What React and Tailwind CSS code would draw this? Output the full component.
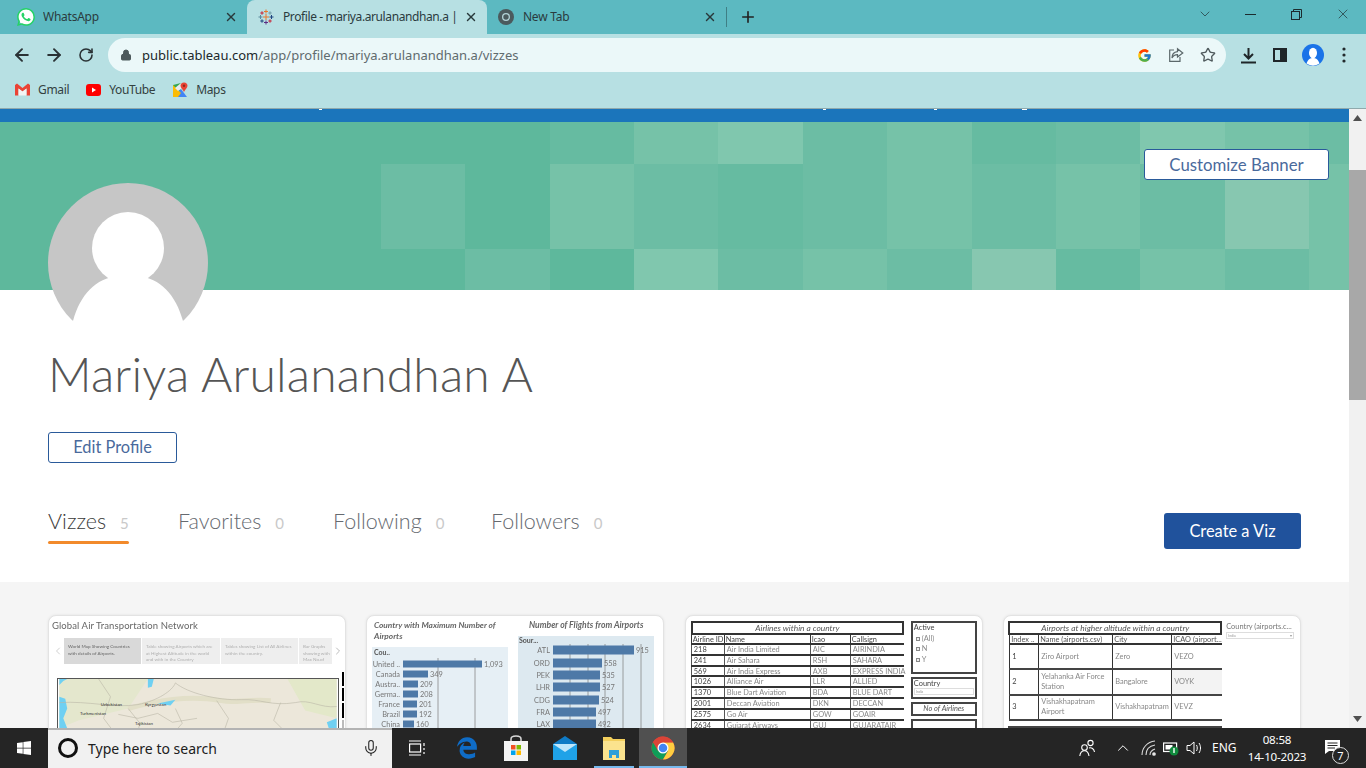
import React from 'react';
import { ArrowLeft, ArrowRight, RotateCw, Lock, Star, Plus, X, ChevronDown, ChevronUp, Mic } from 'lucide-react';
import { SiWhatsapp } from 'react-icons/si';
import { FcGoogle } from 'react-icons/fc';
import { FaWindows } from 'react-icons/fa';
import { FaEdgeLegacy } from 'react-icons/fa6';

const b = 'bg-[#5eb89c]', a = 'bg-[#66bba1]', c = 'bg-[#6cbda4]', d = 'bg-[#76c2a8]', e = 'bg-[#80c7ae]', f = 'bg-[#87c7b0]';
const tiles = [
  b, b, b, a, d, e, c, d, a, c, e, d, c,
  b, c, b, d, c, a, c, d, c, d, c, f, d,
  b, b, c, b, e, c, d, c, f, a, d, c, d,
];

function ChromeLogo({ size = 16 }) {
  return (
    <svg width={size} height={size} viewBox="0 0 48 48">
      <circle cx="24" cy="24" r="23" fill="#db4437" />
      <path d="M4.1 12.5 A23 23 0 0 0 24 47 L36 26 L14 26 Z" fill="#0f9d58" />
      <path d="M24 47 A23 23 0 0 0 44 12.5 L24 12.5 L34 30 Z" fill="#ffcd40" />
      <path d="M24 1 A23 23 0 0 0 4.1 12.5 L14 30 L24 13 L44 13 A23 23 0 0 0 24 1Z" fill="#db4437" />
      <circle cx="24" cy="24" r="11" fill="#fff" />
      <circle cx="24" cy="24" r="8.5" fill="#4285f4" />
    </svg>
  );
}

function TableauLogo() {
  const cross = (x, y, s, col, k) => (
    <path key={k} d={`M${x - s} ${y}H${x + s}M${x} ${y - s}V${y + s}`} stroke={col} strokeWidth="1" />
  );
  return (
    <svg width="16" height="16" viewBox="0 0 16 16">
      {cross(8, 8, 3, '#e8762c', 1)}
      {cross(8, 2.5, 2, '#e8762c', 2)}
      {cross(8, 13.5, 2, '#5b2c83', 3)}
      {cross(2.5, 8, 2, '#59879b', 4)}
      {cross(13.5, 8, 2, '#1f447e', 5)}
      {cross(4, 4, 1.7, '#c72037', 6)}
      {cross(12, 4, 1.7, '#7099a6', 7)}
      {cross(4, 12, 1.7, '#1f447e', 8)}
      {cross(12, 12, 1.7, '#c72037', 9)}
    </svg>
  );
}

function Tab({ icon, title, active, w }) {
  return (
    <div className={`relative h-[34px] flex items-center shrink-0 pr-[9px] ${w} ${active ? 'bg-[#b7e0e3] rounded-t-[8px]' : ''}`}>
      <span className="w-[16px] h-[16px] flex items-center justify-center shrink-0">{icon}</span>
      <span className={`ml-[9px] flex-1 min-w-0 overflow-hidden whitespace-nowrap text-[12px] text-[#2b3b3e] font-['Noto_Sans',sans-serif] ${active ? 'tracking-[-0.4px]' : 'tracking-[-0.25px]'}`}>{title}</span>
      <X size={14} strokeWidth={2.4} className="text-[#28383b] shrink-0 ml-[8px]" />
    </div>
  );
}

function Toolbar() {
  return (
    <div className="h-[38px] flex items-center bg-[#b7e0e3] pt-[4px]">
      <div className="flex items-center gap-[12px] pl-[12px] w-[108px] text-[#2a3235]">
        <ArrowLeft size={20} strokeWidth={2.3} />
        <ArrowRight size={20} strokeWidth={2.3} />
        <RotateCw size={16} strokeWidth={2.4} className="ml-[2px]" />
      </div>
      <div className="w-[1118px] h-[34px] rounded-full bg-[#ebf8f9] flex items-center pl-[12px] pr-[10px]">
        <Lock size={12} fill="#4d5a5d" className="text-[#4d5a5d]" />
        <span className="ml-[10px] pt-[1px] text-[13px] text-[#5f6b6e] font-['Noto_Sans',sans-serif] whitespace-nowrap">
          <span className="text-[#20282b]">public.tableau.com</span>/app/profile/mariya.arulanandhan.a/vizzes
        </span>
        <span className="ml-auto flex items-center gap-[16px]">
          <FcGoogle size={15} />
          <svg width="16" height="16" viewBox="0 0 16 16" fill="none" stroke="#5c686b" strokeWidth="1.2">
            <path d="M6 3H1.7V14.4H12V10" />
            <path d="M9.5 1.7L14.8 6L9.5 10V7.6C7 7.6 5.2 8.6 4 11C4 7.4 6 5 9.5 4.6Z" />
          </svg>
          <Star size={16} strokeWidth={2} className="text-[#505b5e]" />
        </span>
      </div>
      <div className="flex items-center pl-[14px] gap-[15px] text-[#22292c]">
        <svg width="17" height="17" viewBox="0 0 17 17" fill="none" stroke="#1f2629" strokeWidth="2">
          <path d="M8.5 1V11M4 7L8.5 11.5L13 7M1 15.5H16" />
        </svg>
        <svg width="14" height="14" viewBox="0 0 14 14" fill="none" stroke="#1f2629" strokeWidth="2" className="ml-[1px]">
          <rect x="1" y="1" width="12" height="12" />
          <rect x="8" y="1" width="5" height="12" fill="#1f2629" />
        </svg>
        <svg width="22" height="22" viewBox="0 0 22 22">
          <circle cx="11" cy="11" r="11" fill="#1a73e8" />
          <ellipse cx="11" cy="9" rx="4" ry="5.3" fill="#fff" />
          <path d="M4.5 19.5C6 15 8.5 14 11 14C13.5 14 16 15 17.5 19.5A11 11 0 0 1 4.5 19.5Z" fill="#fff" />
        </svg>
        <svg width="4" height="16" viewBox="0 0 4 16" fill="#22292c" className="ml-[3px]">
          <circle cx="2" cy="2" r="1.6" /><circle cx="2" cy="8" r="1.6" /><circle cx="2" cy="14" r="1.6" />
        </svg>
      </div>
    </div>
  );
}

function Bookmark({ icon, label }) {
  return (
    <div className="flex items-center gap-[8px]">
      {icon}
      <span className="text-[12px] text-[#33403f] font-['Noto_Sans',sans-serif] tracking-[-0.35px]">{label}</span>
    </div>
  );
}

function Bookmarks() {
  return (
    <div className="h-[37px] bg-[#b7e0e3] border-b border-[#8fa9ac] flex items-center pl-[15px] gap-[17px] pb-[1px]">
      <Bookmark label="Gmail" icon={
        <svg width="15" height="13" viewBox="0 0 15 13">
          <path d="M0 2V12.5H3.5V5.5L7.5 8.5L11.5 5.5V12.5H15V2L13 0.5L7.5 5L2 0.5Z" fill="#ea4335" />
          <path d="M3.5 5.5V12.5H11.5V5.5L7.5 8.5Z" fill="#f4f4f4" />
        </svg>
      } />
      <Bookmark label="YouTube" icon={
        <svg width="15" height="12" viewBox="0 0 15 12">
          <rect width="15" height="12" rx="3" fill="#ff0000" />
          <path d="M6 3.5V8.5L10 6Z" fill="#fff" />
        </svg>
      } />
      <Bookmark label="Maps" icon={
        <svg width="16" height="16" viewBox="0 0 16 16">
          <path d="M1 3L9 1V15L1 15Z" fill="#34a853" />
          <path d="M1 15L9 7L15 15Z" fill="#4285f4" />
          <path d="M1 3L9 11L6 15H1Z" fill="#fbbc04" />
          <path d="M3 6L9 1V7L6 9Z" fill="#e8eaed" />
          <path d="M12 0.5C9.8 0.5 8.5 2 8.5 3.8C8.5 6 11 7.5 12 10C13 7.5 15.5 6 15.5 3.8C15.5 2 14.2 0.5 12 0.5Z" fill="#ea4335" />
          <circle cx="12" cy="3.8" r="1.2" fill="#8f2a20" />
        </svg>
      } />
    </div>
  );
}

function TabLink({ label, n, active, w }) {
  return (
    <div className={`${w}`}>
      <div className={`flex items-baseline h-[35px] w-[max-content] gap-[14px] ${active ? 'text-[#3a3a3a]' : 'text-[#666a70]'}`}>
        <span className="text-[21.5px] leading-[30px] font-['Lato',sans-serif] font-light">{label}</span>
        <span className="text-[15px] text-[#c9c9c9] font-['Lato',sans-serif]">{n}</span>
      </div>
      {active && <div className="w-[81px] h-[3px] rounded-full bg-[#f28a2b]" />}
    </div>
  );
}

function Card({ children }) {
  return (
    <div className="h-[200px] bg-white rounded-[8px] border border-[#e3e3e3] shadow-[0_0_3px_rgba(0,0,0,0.08)] overflow-hidden">
      <div className="blur-[0.35px] h-full font-['Lato',sans-serif]">{children}</div>
    </div>
  );
}

function Card1() {
  const items = [
    ['World Map Showing Countries with details of Airports.', 'bg-[#d9d9d9] text-[#666] w-[77px]'],
    ['Table showing Airports which are at Highest Altitude in the world and with in the Country', 'bg-[#eeeeee] text-[#b0b0b0] w-[78px]'],
    ['Tables showing List of All Airlines within the country.', 'bg-[#eeeeee] text-[#b0b0b0] w-[77px]'],
    ['Bar Graphs showing with Max No.of Flights from Airports', 'bg-[#eeeeee] text-[#b0b0b0] w-[35px]'],
  ];
  return (
    <div className="pl-[3px] pt-[3px]">
      <div className="text-[9.5px] leading-[13px] text-[#666] tracking-[0.1px]">Global Air Transportation Network</div>
      <div className="flex items-center mt-[6px] text-[#d0d0d0]">
        <ChevronDown size={12} className="rotate-90 w-[12px]" />
        <div className="flex gap-[1px] w-[268px] overflow-hidden">
          {items.map(([t, cl]) => (
            <div key={t} className={`${cl} h-[26px] shrink-0 px-[4px] pt-[5px] text-[4.6px] leading-[6.6px] overflow-hidden`}>{t}</div>
          ))}
        </div>
        <ChevronDown size={12} className="-rotate-90 w-[12px] text-[#bbb]" />
      </div>
      <div className="flex mt-[14px] ml-[5px] gap-[3px]">
        <svg width="282" height="60" viewBox="0 0 282 60" className="shrink-0 border-t-[1.5px] border-x-[1.5px] border-[#555]">
          <rect width="282" height="60" fill="#ece7da" />
          <path d="M0 0H90L70 30L20 42L0 50Z" fill="#e4e7cd" />
          <path d="M232 0H282V40L250 32Z" fill="#e3e8c9" />
          <path d="M70 30C100 22 130 16 165 22C180 25 190 20 215 22" stroke="#e2dfc8" strokeWidth="5" fill="none" />
          <path d="M0 0H8L4 2L2 4L0 6Z" fill="#6fd0f2" />
          <path d="M0 18L6 20L8 30L4 40L8 50L0 60Z" fill="#6fd0f2" />
          <path d="M90 0H96L94 8L90 9Z" fill="#6fd0f2" />
          <path d="M100 25L118 21L113 27Z" fill="#6fd0f2" />
          <path d="M282 40L272 44L274 50L268 60H282Z" fill="#6fd0f2" />
          <g fill="none" stroke="#b9b6a6" strokeWidth="0.6">
            <path d="M0 24C30 22 55 30 80 26C100 22 115 12 118 4C130 14 160 22 185 21C205 20 215 28 240 24C255 20 265 30 282 28" />
            <path d="M40 0L52 18L45 40L60 60M70 30L82 45L78 60M118 30L125 45L112 60M160 22L172 40L165 60M225 24L218 42L236 60" />
            <path d="M60 36L80 40L100 35L115 44L140 40" />
          </g>
          <g fontSize="4.5" fill="#333" fontFamily="Lato, sans-serif">
            <text x="42" y="27">Uzbekistan</text>
            <text x="87" y="27">Kyrgyzstan</text>
            <text x="21" y="37">Turkmenistan</text>
            <text x="77" y="47">Tajikistan</text>
          </g>
        </svg>
        <div className="flex flex-col gap-[2px] -mt-[6px]">
          <div className="w-[1.5px] h-[14px] bg-black" />
          <div className="w-[1.5px] h-[13px] bg-black" />
          <div className="w-[1.5px] h-[15px] bg-black" />
          <div className="w-[1.5px] h-[15px] bg-[#bbb]" />
        </div>
      </div>
    </div>
  );
}

function Card2() {
  const left = [['United ..', 79, '1,093'], ['Canada', 25, '349'], ['Austra..', 15, '209'], ['Germa..', 15, '208'], ['France', 14, '201'], ['Brazil', 14, '192'], ['China', 11, '160']];
  const right = [['ATL', 81, '915'], ['ORD', 49, '558'], ['PEK', 47, '535'], ['LHR', 47, '527'], ['CDG', 46, '524'], ['FRA', 43, '497'], ['LAX', 43, '492']];
  const ly = [48, 58, 68, 78, 88, 98, 108];
  const ry = [34, 47, 59, 71, 84, 96, 108];
  return (
    <svg width="298" height="200" viewBox="0 0 298 200" fontFamily="Lato, sans-serif">
      <rect x="5" y="31" width="136" height="169" fill="#e6eff5" />
      <rect x="151" y="20" width="136" height="180" fill="#dde9f0" />
      <text x="7" y="12" fontSize="8.3" fontStyle="italic" fontWeight="700" fill="#666">Country with Maximum Number of</text>
      <text x="7" y="23" fontSize="8.3" fontStyle="italic" fontWeight="700" fill="#666">Airports</text>
      <text x="162" y="12" fontSize="8.6" fontStyle="italic" fontWeight="700" fill="#666">Number  of  Flights from Airports</text>
      <text x="7" y="39" fontSize="7" fontWeight="700" fill="#555">Cou..</text>
      <text x="152" y="27" fontSize="7" fontWeight="700" fill="#555">Sour...</text>
      {[71, 108].map((x) => <line key={x} x1={x} x2={x} y1="42" y2="200" stroke="#888" strokeWidth="0.8" />)}
      {[203, 221, 238, 256, 274].map((x) => <line key={x} x1={x} x2={x} y1="28" y2="200" stroke="#888" strokeWidth="0.8" />)}
      {left.map(([n, w, v], i) => (
        <g key={n}>
          <rect x="36" y={ly[i] - 3.5} width={w} height="7" fill="#4e79a7" />
          <text x="33" y={ly[i] + 2.5} fontSize="7.4" fill="#777" textAnchor="end">{n}</text>
          <text x={38 + w} y={ly[i] + 2.5} fontSize="7.4" fill="#777">{v}</text>
        </g>
      ))}
      {right.map(([n, w, v], i) => (
        <g key={n}>
          <rect x="186" y={ry[i] - 4.5} width={w} height="9" fill="#4e79a7" />
          <text x="183" y={ry[i] + 2.5} fontSize="7.4" fill="#777" textAnchor="end">{n}</text>
          <text x={188 + w} y={ry[i] + 2.5} fontSize="7.4" fill="#777">{v}</text>
        </g>
      ))}
    </svg>
  );
}

function Card3() {
  const rows = [
    ['218', 'Air India Limited', 'AIC', 'AIRINDIA'],
    ['241', 'Air Sahara', 'RSH', 'SAHARA'],
    ['569', 'Air India Express', 'AXB', 'EXPRESS INDIA'],
    ['1026', 'Alliance Air', 'LLR', 'ALLIED'],
    ['1370', 'Blue Dart Aviation', 'BDA', 'BLUE DART'],
    ['2001', 'Deccan Aviation', 'DKN', 'DECCAN'],
    ['2575', 'Go Air', 'GOW', 'GOAIR'],
    ['2634', 'Gujarat Airways', 'GUJ', 'GUJARATAIR'],
  ];
  const cols = 'grid grid-cols-[33px_86px_40px_53px]';
  return (
    <div className="flex gap-[7px] pl-[5px] pt-[5px] text-[7.4px] text-[#888]">
      <div className="w-[213px]">
        <div className="h-[14px] border-2 border-[#333] flex items-center justify-center italic text-[#555] text-[8.4px]">Airlines within a country</div>
        <div className={`${cols} h-[10px] leading-[10px] text-[#444] border-b-2 border-[#333]`}>
          {['Airline ID', 'Name', 'Icao', 'Callsign'].map((h) => (
            <div key={h} className="border-l-[1.5px] border-[#333] pl-[1px] whitespace-nowrap">{h}</div>
          ))}
        </div>
        {rows.map((r) => (
          <div key={r[0]} className={`${cols} h-[10.8px] leading-[9px] border-b-2 border-[#333]`}>
            {r.map((v, i) => (
              <div key={i} className={`border-l-[1px] border-[#555] pl-[2px] whitespace-nowrap ${i === 0 ? 'text-[#444]' : ''}`}>{v}</div>
            ))}
          </div>
        ))}
      </div>
      <div className="w-[66px] flex flex-col gap-[3px]">
        <div className="h-[53px] border-2 border-[#444] px-[1px] leading-[10.5px]">
          <div className="text-[#444]">Active</div>
          {['(All)', 'N', 'Y'].map((v) => <div key={v} className="pl-[2px] flex items-center gap-[2px]"><span className="w-[4px] h-[4px] border-[0.5px] border-[#888] bg-[#eee]" />{v}</div>)}
        </div>
        <div className="h-[22px] border-2 border-[#444] px-[1px] leading-[9px] text-[#444]">
          Country
          <div className="h-[7px] border-[0.5px] border-[#ddd] text-[3.5px] text-[#999] leading-[6px] pl-[1px]">India</div>
        </div>
        <div className="h-[14px] border-2 border-[#444] flex items-center justify-center italic text-[#555]">No of Airlines</div>
        <div className="h-[40px] border-2 border-[#444] text-center pt-[5px]">86</div>
      </div>
    </div>
  );
}

function Card4() {
  const rows = [
    ['1', 'Ziro Airport', 'Zero', 'VEZO', ''],
    ['2', 'Yelahanka Air Force Station', 'Bangalore', 'VOYK', 'bg-[#f3f3f3]'],
    ['3', 'Vishakhapatnam Airport', 'Vishakhapatnam', 'VEVZ', ''],
  ];
  const cols = 'grid grid-cols-[29px_74px_59px_51px]';
  return (
    <div className="flex gap-[4px] pl-[4px] pt-[5px] text-[7.4px] text-[#888]">
      <div className="w-[214px]">
        <div className="h-[14px] border-2 border-[#333] flex items-center justify-center italic text-[#555] text-[8.4px]">Airports at higher altitude within a country</div>
        <div className={`${cols} h-[10px] leading-[10px] text-[#555] ml-[1px] border-b-2 border-[#333]`}>
          {['Index ..', 'Name (airports.csv)', 'City', 'ICAO (airport...'].map((h) => (
            <div key={h} className="border-l-[1.5px] border-[#333] pl-[1px] whitespace-nowrap">{h}</div>
          ))}
        </div>
        {rows.map((r) => (
          <div key={r[0]} className={`${cols} h-[25.3px] ml-[1px] border-b-2 border-[#444]`}>
            {r.slice(0, 4).map((v, i) => (
              <div key={i} className={`border-l-[1.5px] border-[#333] pl-[2px] flex items-center leading-[10px] ${i === 0 ? 'text-[#444]' : ''} ${i === 3 ? r[4] : ''} ${i === 2 ? 'whitespace-nowrap' : ''}`}>{v}</div>
            ))}
          </div>
        ))}
        <div className="h-[30px] mt-[5px] border-2 border-[#444]" />
      </div>
      <div className="w-[68px] pt-[1px] leading-[9px] text-[#777]">
        <div className="whitespace-nowrap">Country (airports.c...</div>
        <div className="h-[7px] mt-[1px] border-[0.5px] border-[#ddd] text-[3.5px] text-[#999] leading-[6px] pl-[1px] flex justify-between pr-[1px]"><span>India</span><span>▾</span></div>
      </div>
    </div>
  );
}

function Scrollbar() {
  return (
    <div className="w-[17px] shrink-0 bg-[#f1f1f1] flex flex-col items-center">
      <svg width="9" height="6" viewBox="0 0 9 6" className="mt-[6px] shrink-0"><path d="M0 6L4.5 0L9 6Z" fill="#505050" /></svg>
      <div className="w-full h-[230px] bg-[#a8a8a8] mt-[49px] shrink-0" />
      <svg width="9" height="6" viewBox="0 0 9 6" className="mt-auto mb-[6px] shrink-0"><path d="M0 0L4.5 6L9 0Z" fill="#505050" /></svg>
    </div>
  );
}

function Taskbar() {
  return (
    <div className="h-[40px] shrink-0 bg-[#252525] flex items-center text-white font-['Noto_Sans',sans-serif]">
      <div className="w-[48px] h-full flex items-center justify-center"><FaWindows size={16} /></div>
      <div className="w-[344px] h-full bg-[#f1f1f1] border-t-2 border-[#b3b3b3] flex items-center pl-[10px] pr-[12px] pb-[2px]">
        <span className="w-[20px] h-[20px] rounded-full border-[3px] border-[#111] shrink-0" />
        <span className="ml-[10px] text-[14px] text-[#202020]">Type here to search</span>
        <Mic size={18} strokeWidth={1.4} className="ml-auto text-[#222]" />
      </div>
      <div className="flex h-full items-center">
        <div className="w-[50px] flex justify-center">
          <svg width="16" height="16" viewBox="0 0 16 16" fill="none" stroke="#fff" strokeWidth="1.2">
            <path d="M0 1H12M0 15H12" />
            <rect x="0.6" y="4" width="11" height="8" />
            <path d="M15 3V6M15 8V10M15 12V14" />
          </svg>
        </div>
        <div className="w-[50px] flex justify-center"><FaEdgeLegacy size={22} className="text-[#0f6cc6]" /></div>
        <div className="w-[47px] flex justify-center">
          <svg width="24" height="26" viewBox="0 0 24 26">
            <path d="M7 8V4C7 2 9 1 12 1C15 1 17 2 17 4V8" fill="none" stroke="#d8d8d8" strokeWidth="1.5" />
            <rect y="6" width="24" height="20" fill="#f4f4f4" />
            <rect x="7" y="10" width="4.5" height="4.5" fill="#f25022" />
            <rect x="12.5" y="10" width="4.5" height="4.5" fill="#7fba00" />
            <rect x="7" y="15.5" width="4.5" height="4.5" fill="#00a4ef" />
            <rect x="12.5" y="15.5" width="4.5" height="4.5" fill="#ffb900" />
          </svg>
        </div>
        <div className="w-[50px] ml-[1px] flex justify-center">
          <svg width="24" height="24" viewBox="0 0 24 24">
            <path d="M0 8L12 0L24 8V24H0Z" fill="#0f7bc6" />
            <path d="M0 8H24V24H0Z" fill="#1fa2e8" />
            <path d="M0 8L12 16L24 8" fill="#bfe6fb" />
          </svg>
        </div>
        <div className="w-[40px] h-full ml-[4px] flex justify-center items-center relative">
          <svg width="22" height="24" viewBox="0 0 22 24">
            <path d="M0 1H8L10 3H22V24H0Z" fill="#f3cf5c" />
            <path d="M0 5H22V24H0Z" fill="#fbe38e" />
            <path d="M6 14H16V22H13V19H9V22H6Z" fill="#2d9fd8" />
          </svg>
          <div className="absolute left-0 right-0 bottom-0 h-[2px] bg-[#76b9ed]" />
        </div>
        <div className="w-[48px] ml-[5px] h-full bg-[#505050] flex justify-center items-center relative">
          <ChromeLogo size={24} />
          <div className="absolute left-0 right-0 bottom-0 h-[2px] bg-[#76b9ed]" />
        </div>
      </div>
      <div className="ml-auto flex items-center h-full">
        <svg width="16" height="18" viewBox="0 0 16 18" fill="none" stroke="#fff" strokeWidth="1.1" className="mr-[19px]">
          <circle cx="5.5" cy="8.5" r="2.8" />
          <circle cx="11.5" cy="4" r="2.6" />
          <path d="M0.8 17C1.2 13.5 3 11.8 5.5 11.8C8 11.8 9.5 13.5 10 17M10 9C12.5 8 15 10 15.5 13" />
        </svg>
        <ChevronUp size={18} strokeWidth={1.3} className="mr-[8px]" />
        <svg width="16" height="16" viewBox="0 0 16 16" fill="none" stroke="#d8d8d8" strokeWidth="1.1" className="mr-[7px]">
          <path d="M2 15C2 8 7 2 15 1M6 15C6 10 9 6 15 5M10 15C10 12 12 10 15 9" />
          <circle cx="14" cy="14" r="1.3" fill="#fff" />
        </svg>
        <svg width="16" height="16" viewBox="0 0 16 16" className="mr-[7px]">
          <rect x="0.6" y="3" width="13" height="8.5" fill="none" stroke="#fff" strokeWidth="1.2" />
          <rect x="2.5" y="5" width="7" height="4.5" fill="#fff" />
          <circle cx="11" cy="11" r="4.5" fill="#0f8a3c" />
          <path d="M11 8V13" stroke="#fff" strokeWidth="1.4" />
        </svg>
        <svg width="17" height="16" viewBox="0 0 17 16" fill="none" stroke="#fff" strokeWidth="1" className="mr-[9px]">
          <path d="M1 5.5H4L8 2V14L4 10.5H1Z" />
          <path d="M10.5 5C11.5 6.5 11.5 9.5 10.5 11M13 3C15 6 15 10 13 13" />
        </svg>
        <span className="text-[12px] w-[24px] mr-[10px]">ENG</span>
        <div className="w-[62px] flex flex-col items-center text-[11.6px] leading-[17px] tracking-[-0.2px]">
          <span>08:58</span>
          <span>14-10-2023</span>
        </div>
        <div className="relative w-[58px] h-full pl-[17px] pt-[12px]">
          <svg width="16" height="15" viewBox="0 0 16 15">
            <path d="M0 0H15V11H4L0 14Z" fill="#fff" />
            <path d="M2.5 3H12.5M2.5 5.5H12.5M2.5 8H10" stroke="#252525" strokeWidth="1" />
          </svg>
          <span className="absolute left-[24px] top-[19px] w-[17px] h-[17px] rounded-full border border-[#ddd] bg-[#252525] text-[11px] leading-[15px] text-center">7</span>
        </div>
      </div>
    </div>
  );
}

export default function App() {
  return (
    <div className="w-[1366px] h-[768px] overflow-hidden flex flex-col bg-white">
      <div className="h-[34px] shrink-0 bg-[#5cb9c1] flex items-start relative">
        <Tab w="w-[247px] pl-[18px]" title="WhatsApp" icon={
          <span className="relative flex w-[18px] h-[18px] items-center justify-center shrink-0">
            <span className="absolute inset-[1px] rounded-full bg-white" />
            <SiWhatsapp size={18} className="text-[#25d366] relative" />
          </span>
        } />
        <Tab w="w-[240px] pl-[11px]" active title="Profile - mariya.arulanandhan.a |" icon={<TableauLogo />} />
        <Tab w="w-[239px] pl-[11px]" title="New Tab" icon={
          <svg width="16" height="16" viewBox="0 0 16 16">
            <circle cx="8" cy="8" r="8" fill="#4b5a5d" />
            <circle cx="8" cy="8" r="4" fill="#b4d4d8" />
            <circle cx="8" cy="8" r="2.7" fill="#4b5a5d" />
          </svg>
        } />
        <div className="w-px h-[20px] bg-[#3f7f85] mt-[7px]" />
        <Plus size={18} strokeWidth={2.2} className="text-[#222] ml-[12px] mt-[8px]" />
        <div className="ml-auto flex items-center h-[28px] text-[#1c2b2e]">
          <ChevronDown size={16} strokeWidth={1} className="mr-[32px]" />
          <div className="w-[11px] h-px bg-[#1c2b2e] mr-[35px]" />
          <svg width="11" height="11" viewBox="0 0 11 11" fill="none" stroke="#1c2b2e" className="mr-[33px]">
            <path d="M2.5 2.5V0.5H10.5V8.5H8.5" /><rect x="0.5" y="2.5" width="8" height="8" />
          </svg>
          <X size={16} strokeWidth={1} className="mr-[15px]" />
        </div>
      </div>
      <Toolbar />
      <Bookmarks />
      <div className="flex-1 min-h-0 flex overflow-hidden">
        <div className="flex-1 min-w-0 overflow-hidden">
          <div className="h-[13px] bg-[#1b75bb] relative">
            <div className="absolute left-[319px] top-0 w-[3px] h-px bg-white" />
            <div className="absolute left-[823px] top-0 w-[3px] h-px bg-white" />
            <div className="absolute left-[934px] top-0 w-[3px] h-px bg-white" />
            <div className="absolute left-[1022px] top-0 w-[5px] h-px bg-white" />
          </div>
          <div className="relative h-[168px] grid grid-cols-[381px_repeat(11,84.36px)_1fr] grid-rows-[42px_85px_41px] bg-[#5eb89c]">
            {tiles.map((t, i) => <div key={i} className={t} />)}
            <button className="absolute right-[20px] top-[27px] w-[185px] h-[31px] bg-white border border-[#2a5a9a] rounded-[3px] text-[16.8px] text-[#4a6a9c] font-['Lato',sans-serif]">Customize Banner</button>
          </div>
          <div className="flow-root h-[292px] bg-white pl-[48px] pr-[48px] relative">
            <svg width="160" height="160" viewBox="0 0 160 160" className="-mt-[107px] relative block">
              <circle cx="80" cy="80" r="80" fill="#c6c6c6" />
              <circle cx="80" cy="65" r="36" fill="#fff" />
              <path d="M0 160V138H25C32 112 48 95 70 93H90C112 95 128 112 135 138H160V160Z" fill="#fff" />
            </svg>
            <h1 className="mt-[1px] text-[48px] leading-[60px] text-[#555] font-['Lato',sans-serif] font-light tracking-[0.15px]">Mariya Arulanandhan A</h1>
            <button className="mt-[28px] block w-[129px] h-[31px] border border-[#2a5a9a] rounded-[3px] text-[16.4px] text-[#4a6a9c] font-['Lato',sans-serif]">Edit Profile</button>
            <div className="flex items-start mt-[43px]">
              <TabLink w="w-[130px]" label="Vizzes" n="5" active />
              <TabLink w="w-[155px]" label="Favorites" n="0" />
              <TabLink w="w-[158px]" label="Following" n="0" />
              <TabLink w="w-[150px]" label="Followers" n="0" />
              <button className="ml-auto mt-[7px] w-[137px] h-[36px] bg-[#20529c] rounded-[3px] text-white text-[16.4px] font-['Lato',sans-serif]">Create a Viz</button>
            </div>
          </div>
          <div className="h-[300px] bg-[#f5f5f5] px-[48px] pt-[33px]">
            <div className="grid grid-cols-4 gap-[20.67px]">
              <Card><Card1 /></Card>
              <Card><Card2 /></Card>
              <Card><Card3 /></Card>
              <Card><Card4 /></Card>
            </div>
          </div>
        </div>
        <Scrollbar />
      </div>
      <Taskbar />
    </div>
  );
}
